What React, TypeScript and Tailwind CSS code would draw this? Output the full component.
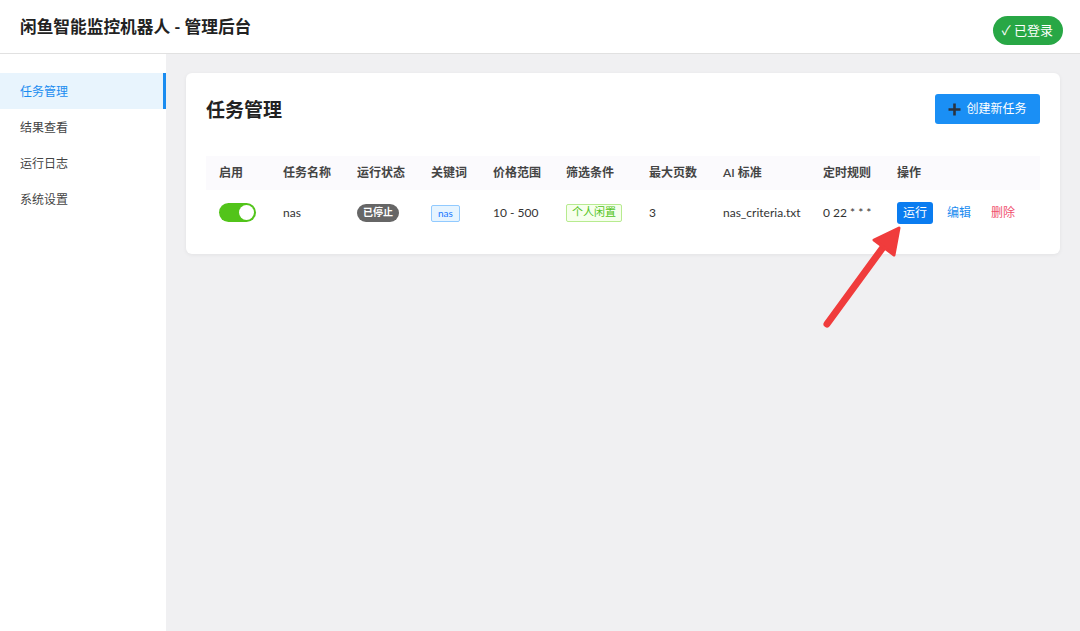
import React from 'react';

const font = { fontFamily: 'Lato, "Noto Sans CJK SC", "Noto Sans", sans-serif' };

const menu = ['任务管理', '结果查看', '运行日志', '系统设置'];

export default function App() {
  return (
    <div className="relative w-[1080px] h-[631px] bg-[#f0f0f2] text-[#333] overflow-hidden" style={font}>
      {/* 顶部栏 */}
      <header className="h-[54px] bg-white border-b border-[#e1e1e1] flex items-center justify-between pl-5 pr-[17px]">
        <h1 className="text-[16.7px] font-bold text-[#222] mt-[3px]">闲鱼智能监控机器人 - 管理后台</h1>
        <span className="bg-[#28a745] text-white text-[13px] rounded-full pl-[9px] pr-[10px] h-[29px] flex items-center mt-[8px]">✓ 已登录</span>
      </header>

      <div className="flex h-[577px]">
        {/* 侧边栏 */}
        <aside className="w-[166px] bg-white pt-[19px]">
          {menu.map((m, i) => (
            <div
              key={m}
              className={
                i === 0
                  ? 'h-[36px] flex items-center pl-5 pt-[2px] text-[12px] text-[#1a8cf0] bg-[#e8f4fd] border-r-[3px] border-[#1a8cf0]'
                  : 'h-[36px] flex items-center pl-5 pt-[2px] text-[12px] text-[#444]'
              }
            >
              {m}
            </div>
          ))}
        </aside>

        {/* 主体 */}
        <main className="flex-1 pl-5 pr-5 pt-[19px]">
          <div className="bg-white rounded-[6px] shadow-[0_1px_4px_rgba(0,0,0,0.06)] px-5 pt-[21px] pb-[19px]">
            <div className="flex items-center justify-between h-[30px]">
              <h2 className="text-[19px] font-bold text-[#222] mt-[2px]">任务管理</h2>
              <button className="bg-[#1a8ff5] text-white text-[12px] rounded-[3px] h-[30px] w-[105px] flex items-center justify-center gap-[5px]">
                <svg width="13" height="13" viewBox="0 0 13 13">
                  <path d="M6.5 0.5v12M0.5 6.5h12" stroke="#2a3340" strokeWidth="2.6" />
                </svg>
                创建新任务
              </button>
            </div>

            <table className="w-full mt-[32px] text-[12px] border-collapse">
              <thead>
                <tr className="bg-[#fbfafd] h-[34px] text-[#444] text-left">
                  <th className="font-semibold pl-[13px] w-[77px]">启用</th>
                  <th className="font-semibold w-[74px]">任务名称</th>
                  <th className="font-semibold w-[74px]">运行状态</th>
                  <th className="font-semibold w-[62px]">关键词</th>
                  <th className="font-semibold w-[73px]">价格范围</th>
                  <th className="font-semibold w-[83px]">筛选条件</th>
                  <th className="font-semibold w-[74px]">最大页数</th>
                  <th className="font-semibold w-[100px]">AI 标准</th>
                  <th className="font-semibold w-[74px]">定时规则</th>
                  <th className="font-semibold">操作</th>
                </tr>
              </thead>
              <tbody>
                <tr className="h-[45px] text-[#333]">
                  <td className="pl-[13px]">
                    <div className="w-[37px] h-[19px] rounded-full bg-[#52c41a] flex items-center justify-end pr-[2px]">
                      <div className="w-[15px] h-[15px] rounded-full bg-white" />
                    </div>
                  </td>
                  <td>nas</td>
                  <td>
                    <span className="inline-flex items-center bg-[#666] text-white text-[10px] font-bold rounded-full px-[6px] h-[18px]">已停止</span>
                  </td>
                  <td>
                    <span className="inline-flex items-center bg-[#e6f4ff] border border-[#91caff] text-[#1677ff] text-[10px] rounded-[2px] px-[6px] h-[17px]">nas</span>
                  </td>
                  <td>10 - 500</td>
                  <td>
                    <span className="inline-flex items-center bg-[#f6ffed] border border-[#b7eb8f] text-[#52c41a] text-[11px] rounded-[2px] px-[5px] h-[18px]">个人闲置</span>
                  </td>
                  <td>3</td>
                  <td>nas_criteria.txt</td>
                  <td>0 22 * * *</td>
                  <td>
                    <div className="flex items-center">
                      <button className="bg-[#0a7cf0] text-white text-[12px] rounded-[3px] w-[36px] h-[22px]">运行</button>
                      <span className="ml-[14px] text-[#1a8cf0]">编辑</span>
                      <span className="ml-[20px] text-[#f0506e]">删除</span>
                    </div>
                  </td>
                </tr>
              </tbody>
            </table>
          </div>
        </main>
      </div>

      {/* 标注箭头 */}
      <svg className="absolute left-0 top-0 pointer-events-none" width="1080" height="631">
        <line x1="827" y1="324" x2="884" y2="246" stroke="#f03c3c" strokeWidth="7" strokeLinecap="round" />
        <polygon points="899,228 874,240 894,255" fill="#f03c3c" stroke="#f03c3c" strokeWidth="3" strokeLinejoin="round" />
      </svg>
    </div>
  );
}
